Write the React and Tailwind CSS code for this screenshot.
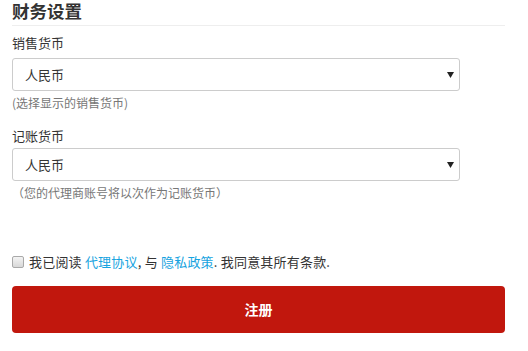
import { useState } from "react";

const FONT = { fontFamily: '"Noto Sans CJK SC", "Noto Sans", sans-serif' };

function CurrencySelect({ value, onChange }) {
  return (
    <div className="relative w-[448px]">
      <select
        value={value}
        onChange={(e) => onChange(e.target.value)}
        className="block h-[33px] w-full appearance-none rounded-[3px] border border-[#cccccc] bg-white pl-[12px] pr-8 text-[13px] text-[#333333] outline-none"
        style={FONT}
      >
        <option value="CNY">人民币</option>
        <option value="USD">美元</option>
        <option value="EUR">欧元</option>
      </select>
      {/* dropdown arrow */}
      <svg
        className="pointer-events-none absolute right-[6px] top-[14px]"
        width="7"
        height="6"
        viewBox="0 0 7 6"
      >
        <path d="M0 0h7L3.5 6z" fill="#222" />
      </svg>
    </div>
  );
}

export default function App() {
  const [sale, setSale] = useState("CNY");
  const [book, setBook] = useState("CNY");
  const [agreed, setAgreed] = useState(false);

  return (
    <div className="min-h-[351px] w-[528px] bg-white" style={FONT}>
      <div className="w-[493px] pl-[12px]">
        <div className="box-border h-[26px] w-[493px] border-b border-[#eeeeee]">
          <h2 className="text-[17.5px] font-bold leading-[22px] text-[#333333]">财务设置</h2>
        </div>

        <div className="mt-[8px] text-[13px] leading-[18px] text-[#333333]">销售货币</div>
        <div className="mt-[6px]">
          <CurrencySelect value={sale} onChange={setSale} />
        </div>
        <div className="mt-[4px] text-[12px] leading-[16px] text-[#777777]">(选择显示的销售货币)</div>

        <div className="mt-[16px] text-[13px] leading-[18px] text-[#333333]">记账货币</div>
        <div className="mt-[3px]">
          <CurrencySelect value={book} onChange={setBook} />
        </div>
        <div className="mt-[4px] text-[12px] leading-[16px] text-[#777777]">（您的代理商账号将以次作为记账货币）</div>

        <label className="mt-[51px] flex h-[20px] cursor-pointer items-center gap-[5px] text-[13px] text-[#333333]">
          <span
            onClick={() => setAgreed((a) => !a)}
            className="flex h-[12px] w-[12px] items-center justify-center rounded-[2px] border border-[#a9a9a9] bg-gradient-to-b from-[#f4f4f4] to-[#d8d8d8] text-[9px] leading-none"
          >
            {agreed ? "✓" : ""}
          </span>
          <span className="tracking-[0.2px]">
            我已阅读 <a className="text-[#16a3e0]">代理协议</a>, 与{" "}
            <a className="text-[#16a3e0]">隐私政策</a>. 我同意其所有条款.
          </span>
        </label>

        <button
          type="button"
          className="mt-[14px] block h-[47px] w-[493px] rounded-[4px] bg-[#c1170d] text-[14px] font-bold text-white"
          style={FONT}
        >
          注册
        </button>
      </div>
    </div>
  );
}
